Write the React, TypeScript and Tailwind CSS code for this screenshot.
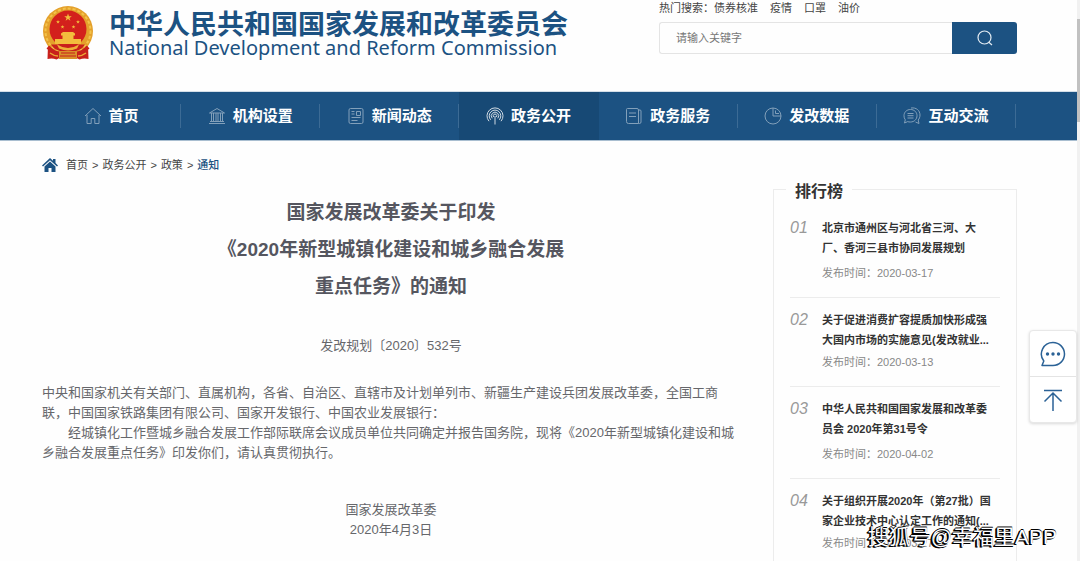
import type { ReactNode } from 'react';

interface NavItem {
  label: string;
  icon: ReactNode;
  active?: boolean;
}

interface RankItem {
  no: string;
  lines: [string, string];
  date: string;
  clamped?: boolean;
}

const navItems: NavItem[] = [
  {
    label: '首页',
    icon: <path d="M1 9 9 1.5 17 9M3 8v8.5h4.2v-5h3.6v5H15V8" />,
  },
  {
    label: '机构设置',
    icon: (
      <path d="M1 16.5h16M2 14.5h14M1.5 6 9 1.5 16.500 6zM3.500 6v8.500M5.500 6v8.500M8 6v8.500M10 6v8.500M12.500 6v8.500M14.500 6v8.500" />
    ),
  },
  {
    label: '新闻动态',
    icon: (
      <path d="M3.500 1.500h11a1.500 1.500 0 0 1 1.500 1.500v12a1.500 1.500 0 0 1-1.500 1.500h-11A1.500 1.500 0 0 1 2 15V3a1.500 1.500 0 0 1 1.500-1.500zM4.500 4.500h3M4.500 7h3M9.500 4.500h4v4h-4zM4.500 10.500h9M4.500 13.500h6" />
    ),
  },
  {
    label: '政务公开',
    active: true,
    icon: (
      <path d="M3 14.200a8 8 0 1 1 12 0M4.700 12.800a5.800 5.800 0 1 1 8.600 0M6.200 11.300a3.700 3.700 0 1 1 5.600 0M7.600 10a1.800 1.800 0 1 1 2.800 0M9 9v8.500" />
    ),
  },
  {
    label: '政务服务',
    icon: (
      <path d="M2.500 1.500h9.500a1.500 1.500 0 0 1 1.500 1.500v13.500h-10a2 2 0 0 1-2-2V2.500a1 1 0 0 1 1-1zM13.500 3h1.500a1 1 0 0 1 1 1v11a1.500 1.500 0 0 1-1.500 1.500h-1M4 6h7M4 9.500h7" />
    ),
  },
  {
    label: '发改数据',
    icon: <path d="M9 1a8 8 0 1 0 8 8M9 1v8h8A8 8 0 0 0 9 1zM11.500 3.500v3h3.500" />,
  },
  {
    label: '互动交流',
    icon: (
      <path d="M7.500 2.500c3.800 0 6.500 2.700 6.500 6.200S11.300 15 7.500 15c-1.200 0-2 0-2.800-.4L1.500 16l.8-3.200A6.200 6.200 0 0 1 1 8.700C1 5.200 3.700 2.500 7.500 2.500zM8 1c5.500-.8 9 2.700 9 7 0 2.200-.8 3.800-1.800 5l.8 3.500-3.500-1.500M4.500 6.500h6M4.500 8.700h6M4.500 11h6" />
    ),
  },
];

const rankItems: RankItem[] = [
  { no: '01', lines: ['北京市通州区与河北省三河、大', '厂、香河三县市协同发展规划'], date: '2020-03-17' },
  {
    no: '02',
    lines: ['关于促进消费扩容提质加快形成强', '大国内市场的实施意见(发改就业...'],
    date: '2020-03-13',
    clamped: true,
  },
  { no: '03', lines: ['中华人民共和国国家发展和改革委', '员会 2020年第31号令'], date: '2020-04-02' },
  {
    no: '04',
    lines: ['关于组织开展2020年（第27批）国', '家企业技术中心认定工作的通知(...'],
    date: '2020-03-27',
    clamped: true,
  },
];

const hotWords = ['债券核准', '疫情', '口罩', '油价'];

function Emblem() {
  const star = 'M0-4 1-1.300 3.800-1.300 1.500.5 2.400 3.200 0 1.600-2.400 3.200-1.500.5-3.800-1.300-1-1.300z';
  return (
    <svg viewBox="0 0 52 56" className="h-14 w-[52px] shrink-0" aria-hidden="true">
      <path d="M6 40 5.500 54q5-1 9 .5l4-2h15l4 2q4-1.500 9-.5L46 40z" fill="#c8201c" />
      <circle cx="26" cy="26" r="25" fill="#e4a02b" />
      <circle cx="26" cy="26" r="22.500" fill="none" stroke="#f3c34a" strokeWidth="2" strokeDasharray="3 2" />
      <circle cx="26" cy="24" r="18.500" fill="#d3201c" />
      <g fill="#f3bd3d">
        <path d={star} transform="translate(26 12.500)" />
        <path d={star} transform="translate(16 17) scale(.5)" />
        <path d={star} transform="translate(36 17) scale(.5)" />
        <path d={star} transform="translate(20.500 22) scale(.5)" />
        <path d={star} transform="translate(31.500 22) scale(.5)" />
        <path d="M19 28.500 21 27h10l2 1.500v2H19zM20.500 30.500h11V34h-11zM13 34h26v5H13z" />
      </g>
      <path d="M9 39.500h34q-3 5-9 6.500H18q-6-1.500-9-6.500z" fill="#c8201c" />
      <path d="M15 39.500q11 7 22 0l-2 4q-9 4-18 0z" fill="#eeb038" />
      <path d="M6 42q6 7 14 6.500M46 42q-6 7-14 6.500" fill="none" stroke="#c8201c" strokeWidth="4" />
      <path d="M17 46h18v8H17z" fill="#d9912a" />
      <path d="M19 48h14M18 51h16M8 51q4-1 7 1M44 51q-4-1-7 1" fill="none" stroke="#c8201c" strokeWidth="1.200" />
      <path d="M8 48q4 3 8 3M44 48q-4 3-8 3" fill="none" stroke="#eaa836" strokeWidth="1.500" />
    </svg>
  );
}

function Header() {
  return (
    <header className="flex h-[92px] items-start justify-between pr-[60px] pl-[42px]">
      <a href="#" className="flex items-start gap-[15px] pt-[5px] text-[#1c5282]">
        <Emblem />
        <span className="flex flex-col whitespace-nowrap pt-1">
          <span className="text-[27px] leading-8 font-bold">中华人民共和国国家发展和改革委员会</span>
          <span className="font-['Noto_Sans'] text-[20px] leading-[13px]">
            National Development and Reform Commission
          </span>
        </span>
      </a>
      <div className="w-[358px]">
        <p className="flex h-[22px] items-center pb-[6px] text-[11px] leading-4 text-[#444]">
          <span>热门搜索：</span>
          {hotWords.map((word) => (
            <a key={word} href="#" className="mr-3">
              {word}
            </a>
          ))}
        </p>
        <form className="flex h-8">
          <input
            type="text"
            aria-label="搜索"
            placeholder="请输入关键字"
            className="min-w-0 flex-1 rounded-l-[3px] border border-r-0 border-[#e4e4e4] pl-4 text-[11px] outline-none placeholder:text-[#777]"
          />
          <button type="button" aria-label="搜索" className="flex w-[65px] items-center justify-center rounded-r-[3px] bg-[#1c5282]">
            <svg viewBox="0 0 16 16" className="h-4 w-4" fill="none" stroke="#e3ebf2" strokeWidth="1.200">
              <circle cx="7.500" cy="7.500" r="6.500" />
              <path d="m11.500 12 3.500 3" />
            </svg>
          </button>
        </form>
      </div>
    </header>
  );
}

function NavBar() {
  return (
    <nav className="flex h-12 items-center bg-[#1c5282] pr-[61px] pl-[42px] shadow-[0_1px_0_#a9bed0,0_-1px_0_#d5dfe8]">
      {navItems.map((item) => (
        <a
          key={item.label}
          href="#"
          className={`flex h-12 flex-1 items-center text-[15px] font-bold text-white ${item.active ? 'bg-[#174975]' : ''}`}
        >
          <span className="flex flex-1 items-center justify-center gap-[7px]">
            <svg
              viewBox="0 0 18 18"
              className={`h-[18px] w-[18px] ${item.active ? 'opacity-80' : 'opacity-45'}`}
              fill="none"
              stroke="#fff"
              strokeWidth="1"
              aria-hidden="true"
            >
              {item.icon}
            </svg>
            {item.label}
          </span>
          <span className={`h-6 w-px ${item.active ? '' : 'bg-[#3c6b95]'}`} />
        </a>
      ))}
    </nav>
  );
}

function Breadcrumb() {
  return (
    <div className="flex h-[50px] items-center gap-2 text-[#444]">
      <svg viewBox="0 0 16 14" className="h-[14px] w-4" fill="#1c5282" aria-hidden="true">
        <path d="M8 0 11 2.800V1h2.500v4L16 7.500l-1 1-7-6.300-7 6.300-1-1z" />
        <path d="m8 3.500 5.500 5V14H9.500v-4h-3v4h-4V8.500z" />
      </svg>
      <p className="flex gap-1 text-[11px]">
        <a href="#">首页</a>
        <span>&gt;</span>
        <a href="#">政务公开</a>
        <span>&gt;</span>
        <a href="#">政策</a>
        <span>&gt;</span>
        <a href="#" className="font-medium text-[#1c5282]">
          通知
        </a>
      </p>
    </div>
  );
}

function Article() {
  return (
    <article className="min-w-0 flex-1 text-[13px] leading-5 text-[#66676b]">
      <h1 className="pt-1 text-center text-[19px] leading-[37px] font-bold text-[#55565f]">
        国家发展改革委关于印发
        <br />
        《2020年新型城镇化建设和城乡融合发展
        <br />
        重点任务》的通知
      </h1>
      <p className="mt-[31px] text-center">发改规划〔2020〕532号</p>
      <p className="mt-[27px]">
        中央和国家机关有关部门、直属机构，各省、自治区、直辖市及计划单列市、新疆生产建设兵团发展改革委，全国工商联，中国国家铁路集团有限公司、国家开发银行、中国农业发展银行：
      </p>
      <p className="indent-[26px]">
        经城镇化工作暨城乡融合发展工作部际联席会议成员单位共同确定并报告国务院，现将《2020年新型城镇化建设和城乡融合发展重点任务》印发你们，请认真贯彻执行。
      </p>
      <p className="mt-[37px] text-center">
        国家发展改革委
        <br />
        2020年4月3日
      </p>
    </article>
  );
}

function Ranking() {
  return (
    <fieldset className="-mt-[14px] h-[400px] w-[244px] min-w-0 shrink-0 border border-[#ececec] px-4">
      <legend className="-ml-1 px-[9px] pt-[6px] text-[16px] leading-5 font-bold text-[#333]">排行榜</legend>
      <ol className="pt-4">
        {rankItems.map((item) => (
          <li key={item.no} className="mb-3 flex border-b border-[#ececec] pb-[14px] leading-5">
            <span className="w-8 shrink-0 text-[16px] text-[#999] italic">{item.no}</span>
            <div className="min-w-0 whitespace-nowrap">
              <a href="#" className="block text-[11px] leading-5 font-bold text-[#333]">
                {item.lines[0]}
                <br />
                {item.lines[1]}
              </a>
              <p className={`text-[11px] leading-5 text-[#888] ${item.clamped ? 'mt-[2px]' : 'mt-[5px]'}`}>
                发布时间：{item.date}
              </p>
            </div>
          </li>
        ))}
      </ol>
    </fieldset>
  );
}

function FloatTools() {
  return (
    <div className="absolute top-[330px] right-[3px] w-12 rounded-[4px] border border-[#e8e8e8] bg-white shadow-[0_1px_3px_rgba(0,0,0,0.15)]">
      <button type="button" aria-label="留言" className="flex h-[46px] w-full items-center justify-center border-b border-[#e4e4e4]">
        <svg viewBox="0 0 26 26" className="h-[26px] w-[26px]" fill="none" stroke="#2b6296" strokeWidth="1.500">
          <path d="M13 1.500a11.500 11.500 0 1 1 0 23H2l1.800-4.500A11.500 11.500 0 0 1 13 1.500z" strokeLinejoin="round" />
          <g fill="#2b6296" stroke="none">
            <circle cx="7.500" cy="13" r="1.700" />
            <circle cx="13" cy="13" r="1.700" />
            <circle cx="18.500" cy="13" r="1.700" />
          </g>
        </svg>
      </button>
      <button type="button" aria-label="返回顶部" className="flex h-[45px] w-full items-center justify-center">
        <svg viewBox="0 0 20 22" className="h-[22px] w-5" fill="none" stroke="#2b6296" strokeWidth="1.500">
          <path d="M1 1.500h18M10 4v18M1.500 12.500 10 4l8.500 8.500" />
        </svg>
      </button>
    </div>
  );
}

export default function App() {
  return (
    <div className="relative flex h-screen overflow-hidden bg-[#fefefe] font-['Liberation_Sans','Noto_Sans_CJK_SC',sans-serif]">
      <div className="min-w-0 flex-1">
        <Header />
        <NavBar />
        <main className="pr-[60px] pl-[42px]">
          <Breadcrumb />
          <div className="flex gap-[33px]">
            <Article />
            <Ranking />
          </div>
        </main>
      </div>
      <div className="w-[3px] bg-[#f1f1f1] pt-[19px]">
        <div className="h-[103px] bg-[#c1c1c1]" />
      </div>
      <FloatTools />
      <p className="absolute right-[23px] bottom-2 text-[21px] leading-8 whitespace-nowrap text-white [text-shadow:-1px_0_#000,-1px_1px_#000,-2px_1px_#000,0_-1px_#000]">
        搜狐号@幸福里APP
      </p>
    </div>
  );
}
